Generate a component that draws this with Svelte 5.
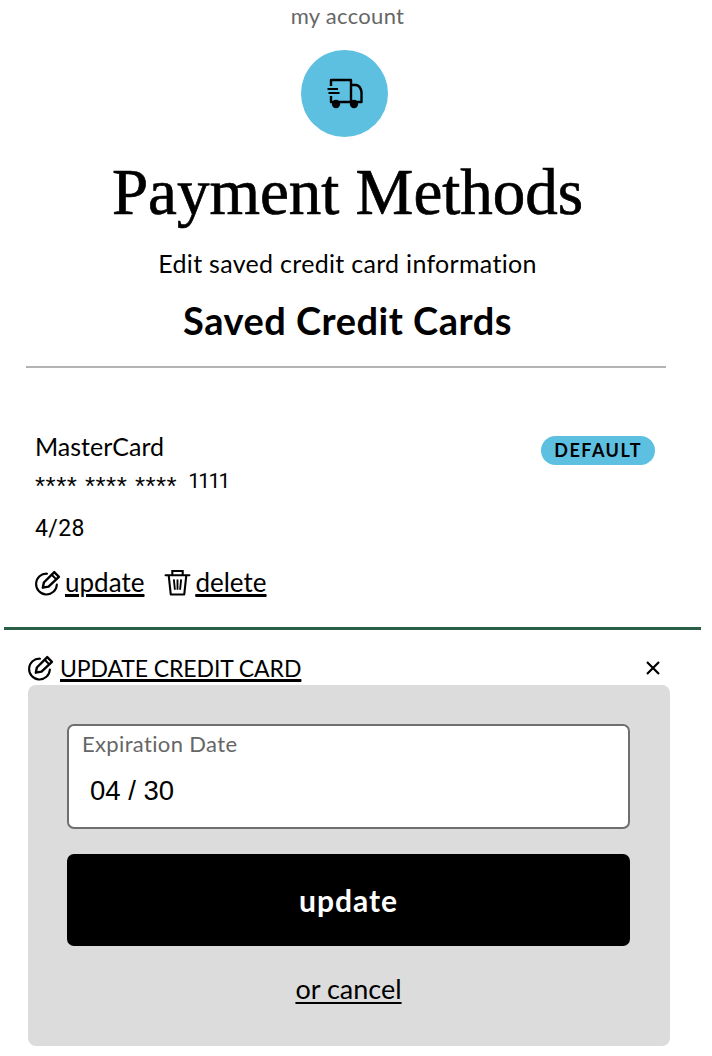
<script>
  const title = 'Payment Methods';
</script>

<div class="page">
  <header class="head">
    <a class="crumb" href="#a">my account</a>
    <div class="badge-circle">
      <svg viewBox="0 0 36 31" width="36" height="31" fill="none" stroke="#000" stroke-width="2.4">
        <path d="M4 8 V2 H24 V24" stroke-linejoin="round" />
        <path d="M4 18 V24 H34.5 V14 Q33.5 8 29.5 7 H24" stroke-linejoin="round" />
        <path d="M0.5 11 H11 M1.5 15 H12.5" stroke-width="2.2" />
        <circle cx="9" cy="26" r="4.2" fill="#000" stroke="none" />
        <circle cx="27" cy="26" r="4.2" fill="#000" stroke="none" />
      </svg>
    </div>
    <h1>{title}</h1>
    <p class="sub">Edit saved credit card information</p>
    <h2>Saved Credit Cards</h2>
  </header>

  <hr class="grey" />

  <section class="card">
    <div class="card-top">
      <div class="card-name">MasterCard</div>
      <span class="default">DEFAULT</span>
    </div>
    <div class="card-num"><span class="stars">**** **** ****</span><span class="digits">1111</span></div>
    <div class="card-exp">4/28</div>
    <div class="actions">
      <a href="#u" class="action">
        <svg class="icon" viewBox="0 0 26 26" width="27" height="27" fill="none" stroke="#000" stroke-width="2">
          <path d="M12.5 4.5 A10 10 0 1 0 22 15" stroke-linecap="round" />
          <path d="M8.5 18 L9.5 13 L19.5 3 L24 7.5 L14 17 Z" stroke-linejoin="round" stroke-width="2.3" />
          <path d="M17 5.5 L21.5 10" />
        </svg>
        <span>update</span>
      </a>
      <a href="#d" class="action">
        <svg class="icon" viewBox="0 0 26 26" width="27" height="27" fill="none" stroke="#000" stroke-width="2">
          <path d="M1.5 6 H24.5" stroke-linecap="round" />
          <path d="M8 6 V2 H18 V6" />
          <path d="M4.5 6 L6.5 24.5 H19.5 L21.5 6" stroke-linejoin="round" />
          <path d="M9.5 10 L10.5 20 M13 10 V20 M16.5 10 L15.5 20" stroke-width="1.8" />
        </svg>
        <span>delete</span>
      </a>
    </div>
  </section>

  <hr class="green" />

  <section class="update">
    <div class="update-head">
      <a href="#c" class="update-title">
        <svg class="icon" viewBox="0 0 26 26" width="27" height="27" fill="none" stroke="#000" stroke-width="2">
          <path d="M12.5 4.5 A10 10 0 1 0 22 15" stroke-linecap="round" />
          <path d="M8.5 18 L9.5 13 L19.5 3 L24 7.5 L14 17 Z" stroke-linejoin="round" stroke-width="2.3" />
          <path d="M17 5.5 L21.5 10" />
        </svg>
        <span>UPDATE CREDIT CARD</span>
      </a>
      <svg class="close" viewBox="0 0 16 16" width="16" height="16" stroke="#000" stroke-width="2.2">
        <path d="M2 2 L14 14 M14 2 L2 14" />
      </svg>
    </div>
    <div class="panel">
      <div class="field">
        <label for="exp">Expiration Date</label>
        <input id="exp" value="04 / 30" />
      </div>
      <button>update</button>
      <a class="cancel" href="#x">or cancel</a>
    </div>
  </section>
</div>

<style>
  :global(body) {
    margin: 0;
    background: #fff;
  }
  .page {
    width: 712px;
    height: 1056px;
    overflow: hidden;
    font-family: "Lato", "Noto Sans", sans-serif;
    color: #000;
  }
  a {
    color: inherit;
  }
  .head {
    display: flex;
    flex-direction: column;
    align-items: center;
    width: 695px;
  }
  .crumb {
    font-size: 22px;
    line-height: 24px;
    letter-spacing: 0.3px;
    margin-top: 4px;
    color: #666;
    text-decoration: none;
  }
  .badge-circle {
    width: 87px;
    height: 87px;
    border-radius: 50%;
    background: #5dc0e0;
    margin: 22px 6px 0 0;
    display: flex;
    align-items: center;
    justify-content: center;
  }
  h1 {
    font-family: "Liberation Serif", serif;
    font-weight: 400;
    font-size: 65px;
    line-height: 72px;
    margin: 19px 0 0;
    -webkit-text-stroke: 0.7px #000;
  }
  .sub {
    font-size: 25px;
    line-height: 30px;
    letter-spacing: 0.3px;
    margin: 20px 0 0;
  }
  h2 {
    font-size: 38px;
    line-height: 44px;
    letter-spacing: 0.5px;
    font-weight: 700;
    margin: 20px 0 0;
  }
  hr {
    border: 0;
    margin: 0;
  }
  .grey {
    height: 2px;
    background: #b3b3b3;
    width: 640px;
    margin: 24px 0 0 26px;
  }
  .card {
    width: 620px;
    margin: 64px 0 0 35px;
  }
  .card-top {
    display: flex;
    justify-content: space-between;
    align-items: flex-start;
  }
  .card-name {
    font-size: 25px;
    line-height: 28px;
  }
  .default {
    font-size: 18px;
    line-height: 29px;
    font-weight: 700;
    letter-spacing: 1.5px;
    background: #5dc0e0;
    border-radius: 15px;
    padding: 0 13px;
    margin-top: 4px;
  }
  .card-num {
    height: 28px;
    line-height: 28px;
    margin-top: 0;
    font-family: "Roboto", sans-serif;
    font-size: 21px;
    display: flex;
    align-items: baseline;
    gap: 11px;
  }
  .stars {
    font-family: "Liberation Sans", sans-serif;
    font-size: 26px;
    letter-spacing: 0.45px;
    line-height: 28px;
    transform: translateY(7px);
  }
  .digits {
    letter-spacing: -1.7px;
  }
  .card-exp {
    font-family: "Roboto", sans-serif;
    font-size: 23px;
    letter-spacing: 0.4px;
    line-height: 28px;
    margin-top: 22px;
  }
  .actions {
    display: flex;
    gap: 20px;
    margin-top: 24px;
    margin-left: -1px;
  }
  .action {
    display: flex;
    align-items: center;
    gap: 4px;
    font-size: 26px;
    line-height: 30px;
  }
  .action span,
  .update-title span {
    text-decoration: underline;
    text-underline-offset: 3px;
  }
  .green {
    height: 3px;
    background: #2b5f45;
    width: 697px;
    margin: 30px 0 0 4px;
  }
  .update {
    width: 642px;
    margin: 0 0 0 28px;
  }
  .update-head {
    display: flex;
    justify-content: space-between;
    align-items: center;
    height: 55px;
    padding: 20px 9px 0 0;
    box-sizing: border-box;
  }
  .update-title {
    display: flex;
    align-items: center;
    gap: 6px;
    font-size: 23px;
    letter-spacing: -0.1px;
    margin-left: -1px;
  }
  .panel {
    background: #dcdcdc;
    border-radius: 8px;
    height: 361px;
    padding: 39px 40px 0 39px;
    box-sizing: border-box;
    display: flex;
    flex-direction: column;
    align-items: center;
  }
  .field {
    width: 100%;
    height: 105px;
    box-sizing: border-box;
    background: #fff;
    border: 2px solid #6f6f6f;
    border-radius: 7px;
    padding: 4px 13px;
    display: flex;
    flex-direction: column;
  }
  label {
    font-size: 22px;
    line-height: 28px;
    letter-spacing: 0.35px;
    color: #666;
  }
  input {
    border: 0;
    outline: 0;
    padding: 0 0 0 8px;
    margin-top: 17px;
    background: none;
    font-family: "Liberation Sans", sans-serif;
    font-size: 27.5px;
    line-height: 32px;
    color: #000;
  }
  button {
    width: 100%;
    height: 92px;
    margin-top: 25px;
    background: #000;
    color: #fff;
    border: 0;
    border-radius: 7px;
    font-family: inherit;
    font-size: 30px;
    font-weight: 700;
    letter-spacing: 1px;
  }
  .cancel {
    margin-top: 27px;
    font-size: 27px;
    line-height: 32px;
    text-decoration: underline;
    text-underline-offset: 3px;
  }
</style>
